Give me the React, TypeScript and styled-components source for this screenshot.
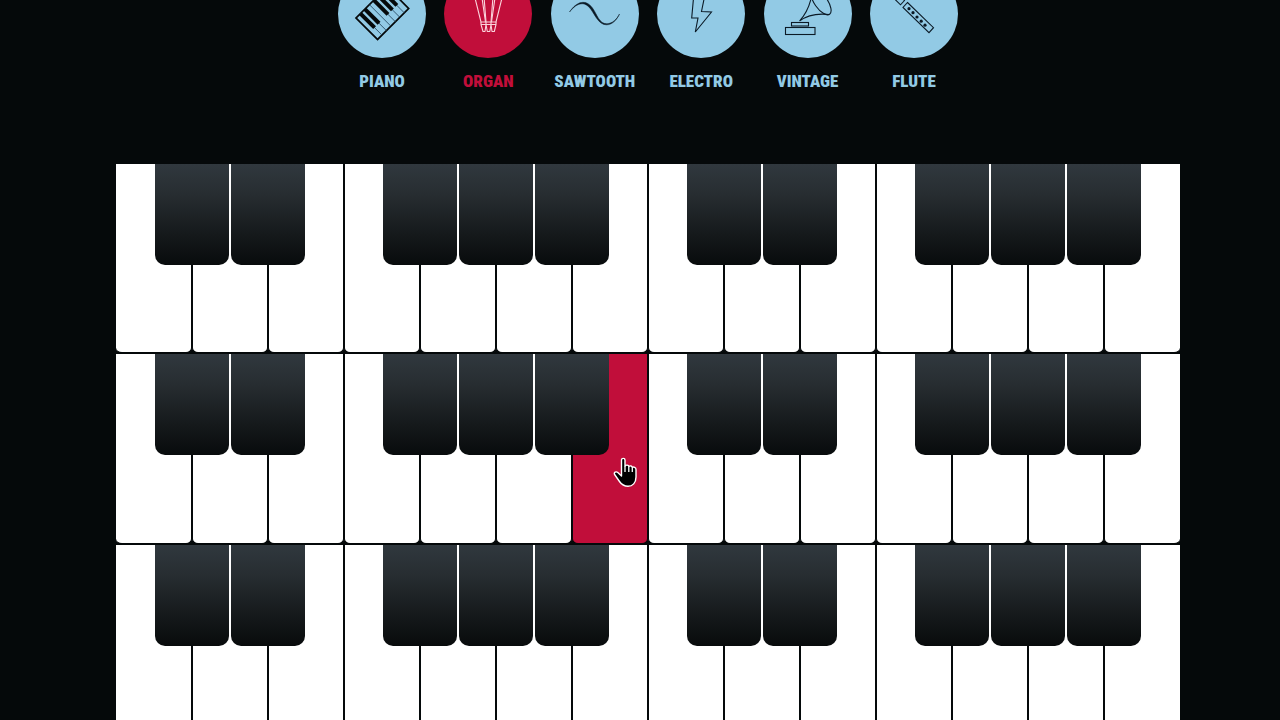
import React from "react";
import styled, { createGlobalStyle } from "styled-components";

const page = "#05090a";
const ink = "#0b1a26";
const sky = "#92cae5";
const crimson = "#c10e3a";
const labelFont = `"Roboto Condensed", "Liberation Sans Narrow", "Liberation Sans", sans-serif`;

const Global = createGlobalStyle`
  * { box-sizing: border-box; }
  body { margin: 0; background: ${page}; }
`;

const Page = styled.main`
  height: 100vh;
  overflow: hidden;
  padding: 0 100px 0 116px;
  background: ${page};
`;

const Picker = styled.nav`
  display: flex;
  justify-content: space-between;
  align-items: flex-start;
  max-width: 620px;
  height: 194px;
  margin: -30px auto 0;
`;

const Instrument = styled.button<{ $active: boolean }>`
  display: flex;
  flex-direction: column;
  align-items: center;
  gap: 11px;
  width: 88px;
  padding: 0;
  border: 0;
  background: none;
  color: ${(p) => (p.$active ? crimson : sky)};
  font: 900 17px/24px ${labelFont};
  text-transform: uppercase;
  cursor: pointer;
`;

const Disc = styled.span<{ $active: boolean }>`
  display: block;
  width: 88px;
  height: 88px;
  border-radius: 50%;
  background: ${(p) => (p.$active ? crimson : sky)};
`;

const Icon = styled.svg`
  display: block;
  width: 100%;
  height: 100%;
  fill: none;
`;

const Keyboard = styled.section`
  display: flex;
  flex-direction: column;
`;

const Octaves = styled.div`
  display: grid;
  grid-template-columns: repeat(14, 1fr);
  height: 190px;
  & + & { height: 191px; }
`;

const Slot = styled.div`
  position: relative;
  display: flex;
`;

const WhiteKey = styled.button<{ $pressed: boolean }>`
  flex: 1;
  padding: 0;
  border: solid ${page};
  border-width: 0 1px 2px;
  border-radius: 0 0 6px 6px;
  background: ${(p) => (p.$pressed ? crimson : "#fff")};
  cursor: pointer;
  ${Slot}:first-child > & { border-left-width: 0; }
  ${Slot}:last-child > & { border-right-width: 0; }
`;

const BlackKey = styled.button`
  position: absolute;
  z-index: 1;
  top: 0;
  right: -37px;
  width: 74px;
  height: 101px;
  padding: 0;
  border: 0;
  border-radius: 0 0 10px 10px;
  background: linear-gradient(#30383e, #272d31 30%, #15191b 70%, #080b0c);
  cursor: pointer;
`;

const Hand = styled.svg`
  position: absolute;
  z-index: 2;
  left: 41px;
  top: 103px;
  width: 26px;
  height: 32px;
  pointer-events: none;
`;

const PianoIcon = () => (
  <Icon viewBox="0 0 88 88" aria-hidden="true">
    <g transform="translate(18 48) rotate(-45)">
      <rect width="44" height="30.5" stroke="#05090a" strokeWidth="1.7" />
      {[1, 2, 3, 4, 5, 6].map((k) => (
        <path key={k} d={`M${k * 6.3} 0V30.5`} stroke="#24445c" strokeWidth="0.8" />
      ))}
      {[1, 2, 4, 5, 6].map((k) => (
        <rect key={k} x={k * 6.3 - 2} width="4" height="20" fill="#05090a" />
      ))}
    </g>
  </Icon>
);

const OrganIcon = () => (
  <Icon viewBox="0 0 88 88" aria-hidden="true">
    <g stroke="#fbd3dc" strokeWidth="1.1" strokeLinejoin="round">
      <path d="M27.5 14L37 52H41.5L36 14Z" />
      <path d="M39 14L42 52H47L50 14Z" />
      <path d="M53 14L47.5 52H52L61.5 14Z" />
      <path d="M37 54.5H52M37 52V54.5L39 61.5H41L42 54.5V52M42 54.5L43.3 61.5H45.8L47 54.5V52M47 54.5L48 61.5H50.3L52 54.5V52" />
    </g>
  </Icon>
);

const SawtoothIcon = () => (
  <Icon viewBox="0 0 88 88" aria-hidden="true">
    <path
      d="M18.5 42C26 31 35 29 41.5 38C46 44 48 54 56 53.8C61.5 53.5 66 49 68.5 44C65.5 50.5 61 54.8 55.5 54.8C48 54.8 44.5 46 40 39.5C34 31 26.5 32 18.5 42Z"
      fill={ink}
      stroke={ink}
      strokeWidth="0.5"
    />
  </Icon>
);

const ElectroIcon = () => (
  <Icon viewBox="0 0 88 88" aria-hidden="true">
    <path d="M37.500 17H49.500L44.500 41.500L54.500 42L38.300 62L41 48H34.700Z" stroke={ink} strokeWidth="1.1" />
  </Icon>
);

const VintageIcon = () => (
  <Icon viewBox="0 0 88 88" aria-hidden="true">
    <g stroke={ink} strokeWidth="1.1">
      <rect x="21.5" y="57.5" width="29.5" height="7" />
      <rect x="27.5" y="52.5" width="17" height="3.5" />
      <path d="M35.5 51C42 44 47 34 48.5 20M35.5 51C42 46 52 43 65 44.5" />
      <ellipse cx="57" cy="32" rx="15" ry="6.5" transform="rotate(55 57 32)" />
    </g>
  </Icon>
);

const FluteIcon = () => (
  <Icon viewBox="0 0 88 88" aria-hidden="true">
    <path
      d="M37.500 32.500L63.500 57.700L59 62.700L33 37.500ZM34.500 30.500L30.500 34.800L17 21.500L21 17Z"
      stroke={ink}
      strokeWidth="1.1"
    />
    {[[39, 38.7], [43, 42.7], [47, 47], [51.2, 51.2], [55, 55.2]].map(([x, y]) => (
      <circle key={x} cx={x} cy={y} r="1.6" fill={ink} />
    ))}
  </Icon>
);

const instruments = [
  { name: "Piano", Art: PianoIcon },
  { name: "Organ", Art: OrganIcon },
  { name: "Sawtooth", Art: SawtoothIcon },
  { name: "Electro", Art: ElectroIcon },
  { name: "Vintage", Art: VintageIcon },
  { name: "Flute", Art: FluteIcon },
];

const notes = ["C", "D", "E", "F", "G", "A", "B"];

export default function App() {
  return (
    <Page>
      <Global />
      <Picker>
        {instruments.map(({ name, Art }) => (
          <Instrument key={name} $active={name === "Organ"}>
            <Disc $active={name === "Organ"}>
              <Art />
            </Disc>
            {name}
          </Instrument>
        ))}
      </Picker>
      <Keyboard>
        {[5, 4, 3].map((row) => (
          <Octaves key={row}>
            {[...notes, ...notes].map((note, i) => {
              const pressed = row === 4 && i === 6;
              return (
                <Slot key={i}>
                  <WhiteKey $pressed={pressed} aria-label={note} />
                  {note !== "E" && note !== "B" && <BlackKey aria-label={`${note} sharp`} />}
                  {pressed && (
                    <Hand viewBox="0 0 26 32" aria-hidden="true">
                      <path
                        d="M8.5 3C8.5 .8 12 .8 12 3V9C13 7.6 15.6 8 15.8 9.5C17 8.3 19.2 9 19.3 10.5C20.5 9.5 23 10.3 23 12.5V20C23 26 19.5 29.3 15 29.3C10.5 29.3 8.5 27.5 6.5 24.5L1.6 17.5C.6 15.5 3 14 4.8 15.5L8.5 19Z"
                        fill="#000"
                        stroke="#fff"
                        strokeWidth="1.4"
                        strokeLinejoin="round"
                      />
                      <path d="M12 9V15M15.8 9.5V15M19.3 10.5V15" stroke="#fff" strokeWidth="1.3" />
                    </Hand>
                  )}
                </Slot>
              );
            })}
          </Octaves>
        ))}
      </Keyboard>
    </Page>
  );
}
